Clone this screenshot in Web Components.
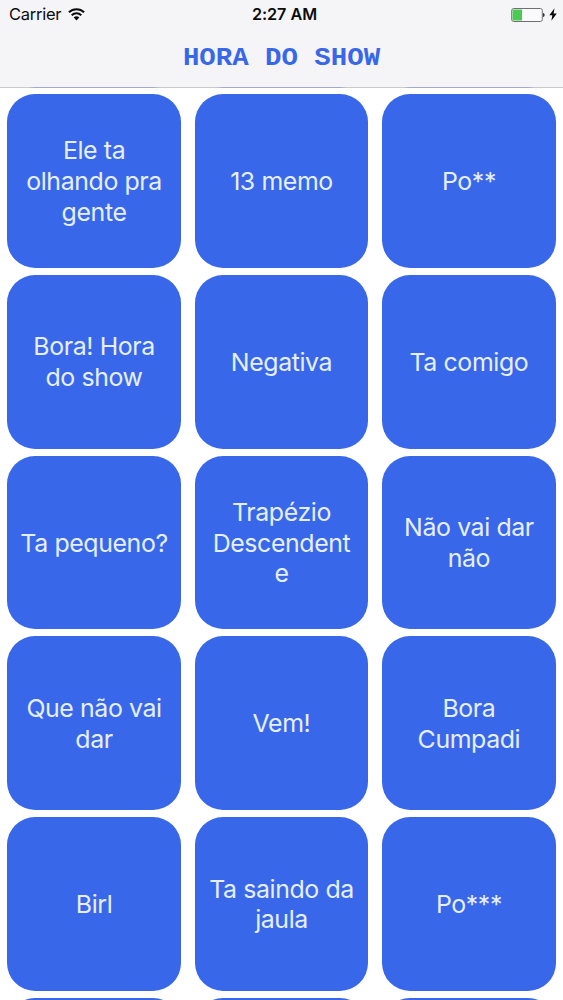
<!DOCTYPE html>
<html lang="pt-BR">
<head>
<meta charset="utf-8">
<meta name="viewport" content="width=device-width, initial-scale=1">
<title>Hora do Show</title>
<style>
  body {
    margin: 0;
    background: #fff;
    font-family: Inter, "Liberation Sans", sans-serif;
    --color-primary: #3867e9;
    --color-bar: #f5f4f7;
  }
</style>
</head>
<body>
<sound-board></sound-board>

<script>
const statusTemplate = document.createElement('template');
statusTemplate.innerHTML = `
  <style>
    :host {
      display: grid;
      grid-template-columns: 1fr auto 1fr;
      align-items: center;
      height: 29px;
      padding: 0 6px 0 9px;
      box-sizing: border-box;
      font-size: 16.5px;
      line-height: 29px;
      color: #0c0c0d;
    }

    .carrier, .power {
      display: flex;
      align-items: center;
    }

    .carrier {
      gap: 6.5px;
      letter-spacing: -0.25px;
    }

    .time {
      font-weight: 600;
      font-size: 16.2px;
      letter-spacing: -0.05px;
      padding-left: 3px;
    }

    .power {
      justify-content: flex-end;
      gap: 4px;
    }

    svg {
      display: block;
    }
  </style>

  <div class="carrier">
    <slot name="carrier"></slot>
    <svg width="17" height="13" viewBox="0 0 17 13" fill="none" stroke="#0c0c0d" stroke-width="2">
      <path d="M.9 4.3a10.8 10.8 0 0 1 15.2 0"/>
      <path d="M3.7 7.3a6.8 6.8 0 0 1 9.6 0"/>
      <path d="M8.5 12.5 5.7 9.5a4 4 0 0 1 5.6 0z" fill="#0c0c0d" stroke="none"/>
    </svg>
  </div>
  <div class="time"><slot name="time"></slot></div>
  <div class="power">
    <svg width="34" height="14" viewBox="0 0 34 14">
      <rect x=".7" y=".5" width="30.6" height="13" rx="2" fill="#fafafa" stroke="#6f6f72"/>
      <path d="M2.7 1.4H11v11.2H2.7A1.2 1.2 0 0 1 1.5 11.4V2.6a1.2 1.2 0 0 1 1.2-1.2z" fill="#4ccb54"/>
      <path d="M32 5c2.2.4 2.2 3.6 0 4z" fill="#333"/>
    </svg>
    <svg width="8" height="13" viewBox="0 0 8 13">
      <path d="M5.5.3.3 7.2h3L2.4 12.7 7.8 5.4H4.6z" fill="#0c0c0d"/>
    </svg>
  </div>
`;

class StatusBar extends HTMLElement {
  connectedCallback() {
    this.attachShadow({ mode: 'open' });
    this.shadowRoot.appendChild(statusTemplate.content.cloneNode(true));
  }
}

customElements.define('status-bar', StatusBar);

const navTemplate = document.createElement('template');
navTemplate.innerHTML = `
  <style>
    :host {
      display: flex;
      flex-direction: column;
      height: 88px;
      box-sizing: border-box;
      background: var(--color-bar) padding-box;
      border-bottom: 1px solid rgba(188, 188, 194, 0.8);
    }

    h1 {
      margin: 0;
      padding-top: 14px;
      text-align: center;
      font: 700 27.4px/32px "Courier New", "Liberation Mono", monospace;
      color: var(--color-primary);
      transform: scaleY(0.93);
    }
  </style>

  <slot name="status"></slot>
  <h1><slot></slot></h1>
`;

class NavBar extends HTMLElement {
  connectedCallback() {
    this.attachShadow({ mode: 'open' });
    this.shadowRoot.appendChild(navTemplate.content.cloneNode(true));
  }
}

customElements.define('nav-bar', NavBar);

const tileTemplate = document.createElement('template');
tileTemplate.innerHTML = `
  <style>
    :host {
      display: flex;
      align-items: center;
      justify-content: center;
      box-sizing: border-box;
      padding: 1px 11.5px 0;
      background: var(--color-primary);
      border-radius: 28px;
      cursor: pointer;
    }

    .label {
      min-width: 0;
      max-width: 100%;
      overflow-wrap: anywhere;
      text-align: center;
      font-size: 24.9px;
      font-weight: 400;
      line-height: 30.8px;
      letter-spacing: -0.4px;
      color: #e6efff;
    }
  </style>

  <div class="label"><slot></slot></div>
`;

class SoundTile extends HTMLElement {
  connectedCallback() {
    this.attachShadow({ mode: 'open' });
    this.shadowRoot.appendChild(tileTemplate.content.cloneNode(true));
  }
}

customElements.define('sound-tile', SoundTile);

const boardTemplate = document.createElement('template');
boardTemplate.innerHTML = `
  <style>
    :host {
      display: block;
      position: relative;
      height: 1000px;
      overflow: hidden;
    }

    /* the bar floats over the scrolled grid */
    nav-bar {
      position: absolute;
      inset: 0 0 auto;
      z-index: 1;
    }

    .grid {
      display: grid;
      grid-template-columns: repeat(3, 1fr);
      grid-auto-rows: 173.6px;
      gap: 7.1px 13.7px;
      padding: 0 7.2px;
      margin-top: -86.4px;
    }

    /* the hidden row shows through the hairline of the bar */
    sound-tile:nth-child(-n + 3) {
      margin-bottom: -0.8px;
    }
  </style>

  <nav-bar>
    <status-bar slot="status">
      <span slot="carrier">Carrier</span>
      <span slot="time">2:27 AM</span>
    </status-bar>
    HORA DO SHOW
  </nav-bar>
  <div class="grid" id="grid"></div>
`;

// empty names are the rows scrolled out at the top and bottom
const sounds = [
  '', '', '',
  'Ele ta olhando pra gente', '13 memo', 'Po**',
  'Bora! Hora do show', 'Negativa', 'Ta comigo',
  'Ta pequeno?', 'Trapézio Descendente', 'Não vai dar não',
  'Que não vai dar', 'Vem!', 'Bora Cumpadi',
  'Birl', 'Ta saindo da jaula', 'Po***',
  '', '', '',
];

class SoundBoard extends HTMLElement {
  connectedCallback() {
    this.attachShadow({ mode: 'open' });
    this.shadowRoot.appendChild(boardTemplate.content.cloneNode(true));
    const grid = this.shadowRoot.getElementById('grid');
    sounds.forEach((name) => {
      const tile = document.createElement('sound-tile');
      tile.textContent = name;
      grid.appendChild(tile);
    });
  }
}

customElements.define('sound-board', SoundBoard);
</script>
</body>
</html>
